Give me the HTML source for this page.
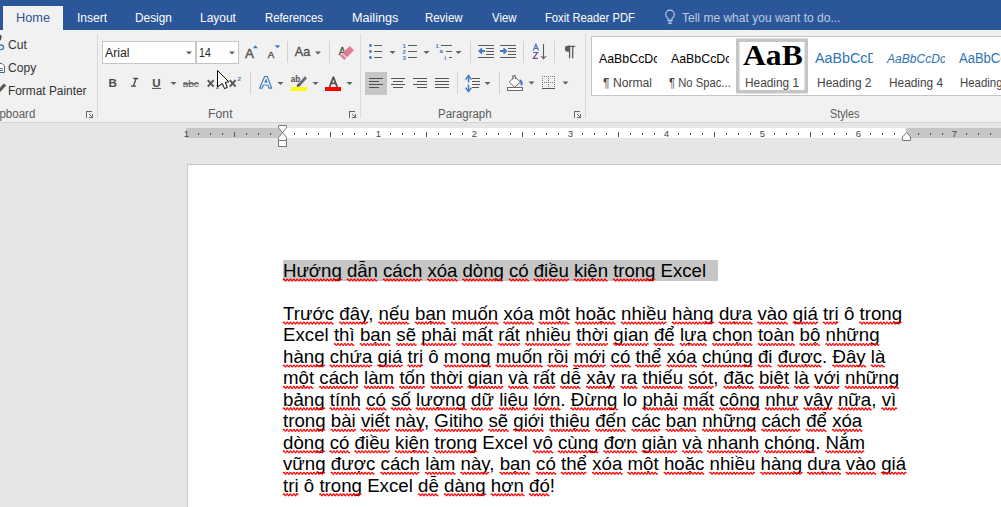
<!DOCTYPE html>
<html><head><meta charset="utf-8">
<style>
html,body{margin:0;padding:0;}
body{width:1001px;height:507px;overflow:hidden;position:relative;background:#e6e6e6;font-family:"Liberation Sans",sans-serif;}
.abs{position:absolute;}
.tx{position:absolute;white-space:pre;line-height:0;transform-origin:0 0;}
#titlebar{position:absolute;left:0;top:0;width:1001px;height:30px;background:#2b579a;}
#hometab{position:absolute;left:3px;top:6px;width:60px;height:25px;background:#f1f1f1;}
#ribbon{position:absolute;left:0;top:30px;width:1001px;height:92px;background:#f1f1f1;border-bottom:1px solid #d4d4d4;}
#page{position:absolute;left:187px;top:164px;width:900px;height:400px;background:#fff;border:1px solid #c8c8c8;}
.doc{position:absolute;left:0;white-space:pre;font-family:"Liberation Sans",sans-serif;font-size:18.67px;line-height:0;color:#000;letter-spacing:0.05px;}
</style></head><body>
<div id="titlebar"></div>
<div id="hometab"></div>
<div id="ribbon"></div>

<!-- ribbon shapes and icons -->
<svg class="abs" style="left:0;top:0" width="1001" height="123" viewBox="0 0 1001 123">
  <!-- group separators -->
  <g fill="#d9d9d9">
    <rect x="97" y="34" width="1" height="84"/>
    <rect x="360" y="34" width="1" height="84"/>
    <rect x="585" y="34" width="1" height="84"/>
  </g>
  <g fill="#d2d2d2">
    <rect x="287" y="41" width="1" height="22"/>
    <rect x="329" y="41" width="1" height="22"/>
    <rect x="250" y="72" width="1" height="22"/>
    <rect x="470" y="41" width="1" height="22"/>
    <rect x="523" y="41" width="1" height="22"/>
    <rect x="554" y="41" width="1" height="22"/>
    <rect x="457" y="72" width="1" height="22"/>
    <rect x="499" y="72" width="1" height="22"/>
  </g>
  <!-- clipboard icons (clipped at left edge) -->
  <path d="M-1 35 H1.2 L1.6 37.5 L0.8 40.3 H-1 Z" fill="#4a4a4a"/>
  <ellipse cx="1" cy="47.3" rx="2.6" ry="2.3" stroke="#3e7bc1" stroke-width="1.3" fill="none"/>
  <path d="M-3 63.5 H2 L4.5 66 V72.5 H-3" stroke="#606060" stroke-width="1" fill="#fff"/>
  <path d="M-2 68.5 H3 M-2 70.5 H3" stroke="#3e7bc1" stroke-width="1"/>
  <path d="M-1 91 L5 84.5" stroke="#555" stroke-width="3.2" fill="none"/>
  <!-- launchers -->
  <g fill="#6a6a6a">
    <path d="M86 111h6v1h-5v6h-1z M89 114h1v1h1v1h1v-2h1v4h-4v-1h2v-1h-1v-1h-1z"/>
    <path d="M349 111h6v1h-5v6h-1z M352 114h1v1h1v1h1v-2h1v4h-4v-1h2v-1h-1v-1h-1z"/>
    <path d="M574 111h6v1h-5v6h-1z M577 114h1v1h1v1h1v-2h1v4h-4v-1h2v-1h-1v-1h-1z"/>
  </g>
  <!-- font boxes -->
  <rect x="102.5" y="41.5" width="93" height="22" fill="#fff" stroke="#c6c6c6"/>
  <rect x="196.5" y="41.5" width="42" height="22" fill="#fff" stroke="#c6c6c6"/>
  <g fill="#606060">
    <path d="M186 51.5 h6 l-3 3z"/>
    <path d="M229 51.5 h6 l-3 3z"/>
    <path d="M315 51.5 h6 l-3 3z"/>
    <path d="M170.5 82 h6 l-3 3z"/>
    <path d="M277.5 82 h6 l-3 3z"/>
    <path d="M312.5 82 h6 l-3 3z"/>
    <path d="M346.5 82 h6 l-3 3z"/>
    <path d="M389.5 51 h6 l-3 3z"/>
    <path d="M423.5 51 h6 l-3 3z"/>
    <path d="M455.5 51 h6 l-3 3z"/>
    <path d="M484.5 82 h6 l-3 3z"/>
    <path d="M528.5 81.5 h6 l-3 3z"/>
    <path d="M562.5 81.5 h6 l-3 3z"/>
  </g>
  <!-- grow / shrink font -->
  <g fill="#505050" stroke="#505050" stroke-width="0.35" font-family="Liberation Sans">
    <text x="244.9" y="57.7" font-size="13.4">A</text>
    <text x="267.8" y="57.7" font-size="9.8">A</text>
    <text x="294.8" y="56.2" font-size="12.6" textLength="15.4" lengthAdjust="spacingAndGlyphs">Aa</text>
  </g>
  <path d="M252.8 48.2 l2.6 -3 l2.6 3z" fill="#3e7bc1"/>
  <path d="M274.8 45.2 h5.4 l-2.7 3z" fill="#3e7bc1"/>
  <!-- clear formatting -->
  <text x="338.8" y="55" font-size="10.5" fill="#505050" stroke="#505050" stroke-width="0.3" font-family="Liberation Sans">A</text>
  <g transform="translate(347 53) rotate(-45)">
    <rect x="-6.8" y="-3" width="13.6" height="6" fill="#e07b90"/>
    <rect x="-4.2" y="-3.2" width="0.9" height="6.4" fill="#f1f1f1"/>
  </g>
  <!-- B I U -->
  <text x="108.4" y="86.7" font-size="11.6" font-weight="bold" fill="#4a4a4a" font-family="Liberation Sans">B</text>
  <path d="M133.2 78.5 h5 M131 86.2 h5 M136.2 78.6 L133.3 86.2" stroke="#4a4a4a" stroke-width="1.3" fill="none"/>
  <text x="152.2" y="86.7" font-size="11.6" font-weight="bold" fill="#4a4a4a" font-family="Liberation Sans">U</text>
  <rect x="152" y="87.9" width="9" height="1" fill="#4a4a4a"/>
  <!-- abc strike, sub, sup -->
  <text x="182.8" y="86.8" font-size="9.6" fill="#555" font-family="Liberation Sans" textLength="16" lengthAdjust="spacingAndGlyphs">abc</text>
  <rect x="183" y="83.2" width="16" height="1" fill="#555"/>
  <path d="M207.8 80.2 L213.6 86.6 M213.6 80.2 L207.8 86.6" stroke="#555" stroke-width="1.9"/>
  <path d="M229.8 80.2 L235.6 86.6 M235.6 80.2 L229.8 86.6" stroke="#555" stroke-width="1.9"/>
  <text x="215.8" y="89" font-size="6.2" fill="#3e7bc1" font-family="Liberation Sans" font-weight="bold">2</text>
  <text x="237.6" y="81" font-size="6.2" fill="#3e7bc1" font-family="Liberation Sans" font-weight="bold">2</text>
  <!-- text effects -->
  <path d="M264.6 76.6 h2.8 l4.2 11.6 h-2.6 l-1.1 -3.2 h-4.6 l-1.1 3.2 h-2.6 z" fill="#fdfdfd" stroke="#3f7cc0" stroke-width="1.2" stroke-linejoin="round"/>
  <path d="M264.2 82.8 h3.6 l-1.8 -4.6z" fill="#3f7cc0"/>
  <!-- highlighter -->
  <text x="290.8" y="81.8" font-size="9.2" fill="#4f4f4f" font-family="Liberation Sans" font-weight="bold" textLength="9.6" lengthAdjust="spacingAndGlyphs">ab</text>
  <path d="M298.5 85.5 L306 77.2" stroke="#6a6a6a" stroke-width="2.8"/>
  <path d="M297.2 86.5 L299 84.6" stroke="#444" stroke-width="2"/>
  <rect x="291" y="87" width="16" height="4" fill="#ffff00"/>
  <!-- font color -->
  <path d="M329.6 86.8 L333.4 77.2 L337.2 86.8 M331 83.4 h4.8" stroke="#555" stroke-width="1.8" fill="none" stroke-linejoin="round"/>
  <rect x="325" y="87" width="16" height="4" fill="#ff0000"/>
  <!-- bullets -->
  <g fill="#3e7bc1">
    <circle cx="370.5" cy="45.5" r="1.4"/><circle cx="370.5" cy="51.5" r="1.4"/><circle cx="370.5" cy="57.5" r="1.4"/>
  </g>
  <g stroke="#5a5a5a" stroke-width="1.1">
    <path d="M374 45.5 h8 M374 51.5 h8 M374 57.5 h8"/>
    <path d="M408 45.5 h9 M408 51.5 h9 M408 57.5 h9"/>
    <path d="M441 45.5 h11 M446 51.5 h6 M449 57.5 h3"/>
  </g>
  <g fill="#3e7bc1" font-family="Liberation Sans" font-weight="bold" font-size="6">
    <text x="402.6" y="48">1</text><text x="402.6" y="54">2</text><text x="402.6" y="60">3</text>
    <text x="435.6" y="48">1</text><text x="439.6" y="53">a</text><text x="444.6" y="60">i</text>
  </g>
  <!-- indent -->
  <g stroke="#5a5a5a" stroke-width="1.1">
    <path d="M478 45.5 h16 M486 48.5 h8 M486 51.5 h8 M486 54.5 h8 M478 57.5 h16"/>
    <path d="M500 45.5 h16 M508 48.5 h8 M508 51.5 h8 M508 54.5 h8 M500 57.5 h16"/>
  </g>
  <path d="M479 51 h6 M482 48.3 l-2.7 2.7 l2.7 2.7" stroke="#3e7bc1" stroke-width="1.8" fill="none"/>
  <path d="M500 51 h6 M503.5 48.3 l2.7 2.7 l-2.7 2.7" stroke="#3e7bc1" stroke-width="1.8" fill="none"/>
  <!-- sort -->
  <path d="M533.3 50.6 L535.9 44.2 L538.6 50.6 M534.3 48.4 h3.2" stroke="#3e7bc1" stroke-width="1.2" fill="none"/>
  <path d="M533.2 52.5 h4.3 l-4.2 5.9 h4.5" stroke="#7a45a8" stroke-width="1.2" fill="none"/>
  <path d="M543.5 44 V58.5 M541 56 l2.5 2.7 l2.5 -2.7" stroke="#5a5a5a" stroke-width="1.1" fill="none"/>
  <!-- pilcrow -->
  <path d="M568 46.3 H575.2 M569.6 46 V58.2 M572.7 46 V58.2" stroke="#5a5a5a" stroke-width="1.3" fill="none"/>
  <path d="M570 45.7 H567.6 a2.7 3.05 0 0 0 0 6.1 H570z" fill="#5a5a5a"/>
  <!-- align buttons -->
  <rect x="365" y="72" width="22" height="23" fill="#c6c6c6"/>
  <g stroke="#555" stroke-width="1.1">
    <path d="M369 78.5 h14 M369 81.5 h10 M369 84.5 h14 M369 87.5 h10"/>
    <path d="M391 78.5 h14 M393 81.5 h10 M391 84.5 h14 M393 87.5 h10"/>
    <path d="M413 78.5 h14 M417 81.5 h10 M413 84.5 h14 M417 87.5 h10"/>
    <path d="M435 78.5 h14 M435 81.5 h14 M435 84.5 h14 M435 87.5 h14"/>
    <path d="M472 78.5 h8 M472 81.5 h8 M472 84.5 h8 M472 87.5 h7"/>
  </g>
  <path d="M468.5 77 V82.6 M468.5 84.6 V90" stroke="#3e7bc1" stroke-width="1.4" fill="none"/><path d="M465.6 79.6 L468.5 75.4 L471.4 79.6 M465.6 87.6 L468.5 91.6 L471.4 87.6" stroke="#3e7bc1" stroke-width="1.5" fill="none" stroke-linejoin="round"/>
  <!-- shading -->
  <rect x="507.5" y="87.5" width="15" height="3" fill="#fff" stroke="#6a6a6a"/>
  <path d="M509.2 82 L514.6 76.8 L520.4 82 L514.6 87.2 z" fill="#fff" stroke="#6a6a6a"/>
  <path d="M512.8 79.5 V75.7 h2.6 v3.5" stroke="#6a6a6a" fill="none"/>
  <path d="M519.6 79 q3.6 1.6 3 5.2 l-1.6 2z" fill="#3e7bc1"/>
  <!-- borders -->
  <g fill="#777">
    <rect x="542" y="76" width="1" height="1"/><rect x="544" y="76" width="1" height="1"/><rect x="546" y="76" width="1" height="1"/><rect x="548" y="76" width="1" height="1"/><rect x="550" y="76" width="1" height="1"/><rect x="552" y="76" width="1" height="1"/><rect x="554" y="76" width="1" height="1"/>
    <rect x="542" y="82" width="1" height="1"/><rect x="544" y="82" width="1" height="1"/><rect x="546" y="82" width="1" height="1"/><rect x="548" y="82" width="1" height="1"/><rect x="550" y="82" width="1" height="1"/><rect x="552" y="82" width="1" height="1"/><rect x="554" y="82" width="1" height="1"/>
    <rect x="542" y="78" width="1" height="1"/><rect x="542" y="80" width="1" height="1"/><rect x="542" y="84" width="1" height="1"/><rect x="542" y="86" width="1" height="1"/>
    <rect x="548" y="78" width="1" height="1"/><rect x="548" y="80" width="1" height="1"/><rect x="548" y="84" width="1" height="1"/><rect x="548" y="86" width="1" height="1"/>
    <rect x="554" y="78" width="1" height="1"/><rect x="554" y="80" width="1" height="1"/><rect x="554" y="84" width="1" height="1"/><rect x="554" y="86" width="1" height="1"/>
  </g>
  <rect x="542" y="88" width="13" height="1" fill="#555"/>
  <!-- styles gallery -->
  <rect x="591.5" y="36.5" width="420" height="59" fill="#fff" stroke="#c6c6c6"/>
  <rect x="737.75" y="40.25" width="68.5" height="51.5" fill="none" stroke="#c6c6c6" stroke-width="3.5"/>
  <!-- lightbulb -->
  <path d="M667.9 22 h4.2 M668.4 23.6 h3.2" stroke="#bccbe2" stroke-width="1"/>
  <path d="M668 20.4 v-2 c-1.4 -1 -2.3 -2.4 -2.3 -4 a4.3 4.3 0 0 1 8.6 0 c0 1.6 -0.9 3 -2.3 4 v2 z" fill="none" stroke="#bccbe2" stroke-width="1.1"/>
</svg>

<div class='tx' style='left:15.68px;top:18.00px;font-family:"Liberation Sans";font-size:12.5px;font-weight:normal;font-style:normal;color:#2b579a;transform:scaleX(1.0187)'>Home</div>
<div class='tx' style='left:77.03px;top:18.00px;font-family:"Liberation Sans";font-size:12.5px;font-weight:normal;font-style:normal;color:#ffffff;transform:scaleX(0.9667)'>Insert</div>
<div class='tx' style='left:135.45px;top:18.00px;font-family:"Liberation Sans";font-size:12.5px;font-weight:normal;font-style:normal;color:#ffffff;transform:scaleX(0.9486)'>Design</div>
<div class='tx' style='left:200.44px;top:18.00px;font-family:"Liberation Sans";font-size:12.5px;font-weight:normal;font-style:normal;color:#ffffff;transform:scaleX(0.9568)'>Layout</div>
<div class='tx' style='left:265.10px;top:18.00px;font-family:"Liberation Sans";font-size:12.5px;font-weight:normal;font-style:normal;color:#ffffff;transform:scaleX(0.9048)'>References</div>
<div class='tx' style='left:351.59px;top:18.00px;font-family:"Liberation Sans";font-size:12.5px;font-weight:normal;font-style:normal;color:#ffffff;transform:scaleX(1.0091)'>Mailings</div>
<div class='tx' style='left:425.38px;top:18.00px;font-family:"Liberation Sans";font-size:12.5px;font-weight:normal;font-style:normal;color:#ffffff;transform:scaleX(0.9150)'>Review</div>
<div class='tx' style='left:492.20px;top:18.00px;font-family:"Liberation Sans";font-size:12.5px;font-weight:normal;font-style:normal;color:#ffffff;transform:scaleX(0.9111)'>View</div>
<div class='tx' style='left:545.30px;top:18.00px;font-family:"Liberation Sans";font-size:12.5px;font-weight:normal;font-style:normal;color:#ffffff;transform:scaleX(0.8990)'>Foxit Reader PDF</div>
<div class='tx' style='left:682.00px;top:18.00px;font-family:"Liberation Sans";font-size:12.5px;font-weight:normal;font-style:normal;color:#bccbe2;transform:scaleX(0.9622)'>Tell me what you want to do...</div>
<div class='tx' style='left:7.79px;top:45.00px;font-family:"Liberation Sans";font-size:12px;font-weight:normal;font-style:normal;color:#333333;transform:scaleX(1.0111)'>Cut</div>
<div class='tx' style='left:7.79px;top:68.00px;font-family:"Liberation Sans";font-size:12px;font-weight:normal;font-style:normal;color:#333333;transform:scaleX(1.0074)'>Copy</div>
<div class='tx' style='left:7.81px;top:91.00px;font-family:"Liberation Sans";font-size:12px;font-weight:normal;font-style:normal;color:#333333;transform:scaleX(0.9897)'>Format Painter</div>
<div class='tx' style='left:-13.96px;top:114.00px;font-family:"Liberation Sans";font-size:12px;font-weight:normal;font-style:normal;color:#5c5c5c;transform:scaleX(0.9600)'>Clipboard</div>
<div class='tx' style='left:208.48px;top:114.00px;font-family:"Liberation Sans";font-size:12px;font-weight:normal;font-style:normal;color:#5c5c5c;transform:scaleX(1.0217)'>Font</div>
<div class='tx' style='left:437.84px;top:114.00px;font-family:"Liberation Sans";font-size:12px;font-weight:normal;font-style:normal;color:#5c5c5c;transform:scaleX(0.9574)'>Paragraph</div>
<div class='tx' style='left:829.70px;top:114.00px;font-family:"Liberation Sans";font-size:12px;font-weight:normal;font-style:normal;color:#5c5c5c;transform:scaleX(0.8968)'>Styles</div>
<div class='tx' style='left:105.20px;top:53.20px;font-family:"Liberation Sans";font-size:12.5px;font-weight:normal;font-style:normal;color:#262626;transform:scaleX(0.9792)'>Arial</div>
<div class='tx' style='left:199.15px;top:53.20px;font-family:"Liberation Sans";font-size:12.5px;font-weight:normal;font-style:normal;color:#262626;transform:scaleX(0.8462)'>14</div>
<div class='tx' style='left:603.00px;top:83.00px;font-family:"Liberation Sans";font-size:12px;font-weight:normal;font-style:normal;color:#444444;transform:scaleX(1.0104)'>¶ Normal</div>
<div class='tx' style='left:669.00px;top:83.00px;font-family:"Liberation Sans";font-size:12px;font-weight:normal;font-style:normal;color:#444444;transform:scaleX(0.9385)'>¶ No Spac...</div>
<div class='tx' style='left:745.01px;top:83.00px;font-family:"Liberation Sans";font-size:12px;font-weight:normal;font-style:normal;color:#444444;transform:scaleX(0.9887)'>Heading 1</div>
<div class='tx' style='left:816.70px;top:83.00px;font-family:"Liberation Sans";font-size:12px;font-weight:normal;font-style:normal;color:#444444;transform:scaleX(0.9962)'>Heading 2</div>
<div class='tx' style='left:888.71px;top:83.00px;font-family:"Liberation Sans";font-size:12px;font-weight:normal;font-style:normal;color:#444444;transform:scaleX(0.9870)'>Heading 4</div>
<div class='tx' style='left:960.45px;top:83.00px;font-family:"Liberation Sans";font-size:12px;font-weight:normal;font-style:normal;color:#444444;transform:scaleX(0.9500)'>Heading</div>
<div style='position:absolute;left:591px;top:0;width:66px;height:123px;overflow:hidden'><div style='position:absolute;left:-591px;top:0'><div class='tx' style='left:598.50px;top:59.20px;font-family:"Liberation Sans";font-size:13px;font-weight:normal;font-style:normal;color:#000000;transform:scaleX(0.9500)'>AaBbCcDc</div></div></div>
<div style='position:absolute;left:665px;top:0;width:64px;height:123px;overflow:hidden'><div style='position:absolute;left:-665px;top:0'><div class='tx' style='left:670.80px;top:59.20px;font-family:"Liberation Sans";font-size:13px;font-weight:normal;font-style:normal;color:#000000;transform:scaleX(0.9500)'>AaBbCcDc</div></div></div>
<div class='tx' style='left:743.00px;top:54.70px;font-family:"Liberation Serif";font-size:30px;font-weight:bold;font-style:normal;color:#000000;transform:scaleX(1.0536)'>AaB</div>
<div style='position:absolute;left:810px;top:0;width:63px;height:123px;overflow:hidden'><div style='position:absolute;left:-810px;top:0'><div class='tx' style='left:815.00px;top:57.80px;font-family:"Liberation Sans";font-size:15.5px;font-weight:normal;font-style:normal;color:#2e74b5;transform:scaleX(0.9200)'>AaBbCcDd</div></div></div>
<div style='position:absolute;left:880px;top:0;width:65px;height:123px;overflow:hidden'><div style='position:absolute;left:-880px;top:0'><div class='tx' style='left:887.00px;top:59.00px;font-family:"Liberation Sans";font-size:13px;font-weight:normal;font-style:italic;color:#2e74b5;transform:scaleX(0.9300)'>AaBbCcDc</div></div></div>
<div class='tx' style='left:959.00px;top:58.00px;font-family:"Liberation Sans";font-size:14px;font-weight:normal;font-style:normal;color:#2e74b5;transform:scaleX(0.9300)'>AaBbCc</div>

<!-- ruler -->
<svg class="abs" style="left:0;top:123px" width="1001" height="30" viewBox="0 123 1001 30">
  <rect x="186" y="128" width="97" height="10" fill="#c6c6c6"/>
  <rect x="283" y="128" width="623" height="10" fill="#ffffff"/>
  <rect x="906" y="128" width="95" height="10" fill="#c6c6c6"/>
  <text x='186.5' y='137' font-size='9.5' text-anchor='middle' fill='#444' font-family='Liberation Sans'>1</text>
<rect x='198' y='133' width='1' height='2' fill='#555'/>
<rect x='210' y='133' width='1' height='2' fill='#555'/>
<rect x='222' y='133' width='1' height='2' fill='#555'/>
<rect x='234' y='132' width='1' height='5' fill='#555'/>
<rect x='246' y='133' width='1' height='2' fill='#555'/>
<rect x='258' y='133' width='1' height='2' fill='#555'/>
<rect x='270' y='133' width='1' height='2' fill='#555'/>
<rect x='294' y='133' width='1' height='2' fill='#555'/>
<rect x='306' y='133' width='1' height='2' fill='#555'/>
<rect x='318' y='133' width='1' height='2' fill='#555'/>
<rect x='330' y='132' width='1' height='5' fill='#555'/>
<rect x='342' y='133' width='1' height='2' fill='#555'/>
<rect x='354' y='133' width='1' height='2' fill='#555'/>
<rect x='366' y='133' width='1' height='2' fill='#555'/>
<text x='378.5' y='137' font-size='9.5' text-anchor='middle' fill='#444' font-family='Liberation Sans'>1</text>
<rect x='390' y='133' width='1' height='2' fill='#555'/>
<rect x='402' y='133' width='1' height='2' fill='#555'/>
<rect x='414' y='133' width='1' height='2' fill='#555'/>
<rect x='426' y='132' width='1' height='5' fill='#555'/>
<rect x='438' y='133' width='1' height='2' fill='#555'/>
<rect x='450' y='133' width='1' height='2' fill='#555'/>
<rect x='462' y='133' width='1' height='2' fill='#555'/>
<text x='474.5' y='137' font-size='9.5' text-anchor='middle' fill='#444' font-family='Liberation Sans'>2</text>
<rect x='486' y='133' width='1' height='2' fill='#555'/>
<rect x='498' y='133' width='1' height='2' fill='#555'/>
<rect x='510' y='133' width='1' height='2' fill='#555'/>
<rect x='522' y='132' width='1' height='5' fill='#555'/>
<rect x='534' y='133' width='1' height='2' fill='#555'/>
<rect x='546' y='133' width='1' height='2' fill='#555'/>
<rect x='558' y='133' width='1' height='2' fill='#555'/>
<text x='570.5' y='137' font-size='9.5' text-anchor='middle' fill='#444' font-family='Liberation Sans'>3</text>
<rect x='582' y='133' width='1' height='2' fill='#555'/>
<rect x='594' y='133' width='1' height='2' fill='#555'/>
<rect x='606' y='133' width='1' height='2' fill='#555'/>
<rect x='618' y='132' width='1' height='5' fill='#555'/>
<rect x='630' y='133' width='1' height='2' fill='#555'/>
<rect x='642' y='133' width='1' height='2' fill='#555'/>
<rect x='654' y='133' width='1' height='2' fill='#555'/>
<text x='666.5' y='137' font-size='9.5' text-anchor='middle' fill='#444' font-family='Liberation Sans'>4</text>
<rect x='678' y='133' width='1' height='2' fill='#555'/>
<rect x='690' y='133' width='1' height='2' fill='#555'/>
<rect x='702' y='133' width='1' height='2' fill='#555'/>
<rect x='714' y='132' width='1' height='5' fill='#555'/>
<rect x='726' y='133' width='1' height='2' fill='#555'/>
<rect x='738' y='133' width='1' height='2' fill='#555'/>
<rect x='750' y='133' width='1' height='2' fill='#555'/>
<text x='762.5' y='137' font-size='9.5' text-anchor='middle' fill='#444' font-family='Liberation Sans'>5</text>
<rect x='774' y='133' width='1' height='2' fill='#555'/>
<rect x='786' y='133' width='1' height='2' fill='#555'/>
<rect x='798' y='133' width='1' height='2' fill='#555'/>
<rect x='810' y='132' width='1' height='5' fill='#555'/>
<rect x='822' y='133' width='1' height='2' fill='#555'/>
<rect x='834' y='133' width='1' height='2' fill='#555'/>
<rect x='846' y='133' width='1' height='2' fill='#555'/>
<text x='858.5' y='137' font-size='9.5' text-anchor='middle' fill='#444' font-family='Liberation Sans'>6</text>
<rect x='870' y='133' width='1' height='2' fill='#555'/>
<rect x='882' y='133' width='1' height='2' fill='#555'/>
<rect x='894' y='133' width='1' height='2' fill='#555'/>
<rect x='918' y='133' width='1' height='2' fill='#555'/>
<rect x='930' y='133' width='1' height='2' fill='#555'/>
<rect x='942' y='133' width='1' height='2' fill='#555'/>
<text x='954.5' y='137' font-size='9.5' text-anchor='middle' fill='#444' font-family='Liberation Sans'>7</text>
<rect x='966' y='133' width='1' height='2' fill='#555'/>
<rect x='978' y='133' width='1' height='2' fill='#555'/>
<rect x='990' y='133' width='1' height='2' fill='#555'/>
  <path d="M278.5 125.5 H286.5 V127.8 L282.5 132.6 L278.5 127.8 Z" fill="#fff" stroke="#7a7a7a"/>
  <path d="M282.5 132.6 L286.5 137.4 V140.5 H278.5 V137.4 Z" fill="#fff" stroke="#7a7a7a"/>
  <rect x="278.5" y="140.5" width="8" height="6" fill="#fff" stroke="#7a7a7a"/>
  <path d="M902.5 140.5 V137 L906.5 132.5 L910.5 137 V140.5 Z" fill="#fff" stroke="#7a7a7a"/>
</svg>

<div id="page"></div>
<div class='abs' style='left:283px;top:260px;width:435px;height:21px;background:#c6c6c6'></div>
<div class='doc' style='left:283px;top:271.03px;letter-spacing:-0.045px'><span class='sq'>Hướng</span> <span class='sq'>dẫn</span> <span class='sq'>cách</span> <span class='sq'>xóa</span> <span class='sq'>dòng</span> <span class='sq'>có</span> <span class='sq'>điều</span> <span class='sq'>kiện</span> <span class='sq'>trong</span> Excel</div>
<div class='doc' style='left:283px;top:313.97px;letter-spacing:0.0286px'><span class='sq'>Trước</span> <span class='sq'>đây</span>, <span class='sq'>nếu</span> <span class='sq'>bạn</span> <span class='sq'>muốn</span> <span class='sq'>xóa</span> <span class='sq'>một</span> <span class='sq'>hoặc</span> <span class='sq'>nhiều</span> <span class='sq'>hàng</span> <span class='sq'>dựa</span> <span class='sq'>vào</span> <span class='sq'>giá</span> <span class='sq'>trị</span> ô <span class='sq'>trong</span></div>
<div class='doc' style='left:283px;top:335.44px;letter-spacing:0.0171px'>Excel <span class='sq'>thì</span> <span class='sq'>bạn</span> <span class='sq'>sẽ</span> <span class='sq'>phải</span> <span class='sq'>mất</span> <span class='sq'>rất</span> <span class='sq'>nhiều</span> <span class='sq'>thời</span> <span class='sq'>gian</span> <span class='sq'>để</span> <span class='sq'>lựa</span> <span class='sq'>chọn</span> <span class='sq'>toàn</span> <span class='sq'>bộ</span> <span class='sq'>những</span></div>
<div class='doc' style='left:283px;top:356.91px;letter-spacing:0.0000px'><span class='sq'>hàng</span> <span class='sq'>chứa</span> <span class='sq'>giá</span> <span class='sq'>trị</span> ô <span class='sq'>mong</span> <span class='sq'>muốn</span> <span class='sq'>rồi</span> <span class='sq'>mới</span> <span class='sq'>có</span> <span class='sq'>thể</span> <span class='sq'>xóa</span> <span class='sq'>chúng</span> <span class='sq'>đi</span> <span class='sq'>được</span>. <span class='sq'>Đây</span> <span class='sq'>là</span></div>
<div class='doc' style='left:283px;top:378.38px;letter-spacing:0.0187px'><span class='sq'>một</span> <span class='sq'>cách</span> <span class='sq'>làm</span> <span class='sq'>tốn</span> <span class='sq'>thời</span> <span class='sq'>gian</span> <span class='sq'>và</span> <span class='sq'>rất</span> <span class='sq'>dễ</span> <span class='sq'>xảy</span> <span class='sq'>ra</span> <span class='sq'>thiếu</span> <span class='sq'>sót</span>, <span class='sq'>đặc</span> <span class='sq'>biệt</span> <span class='sq'>là</span> <span class='sq'>với</span> <span class='sq'>những</span></div>
<div class='doc' style='left:283px;top:399.85px;letter-spacing:0.0197px'><span class='sq'>bảng</span> <span class='sq'>tính</span> <span class='sq'>có</span> <span class='sq'>số</span> <span class='sq'>lượng</span> <span class='sq'>dữ</span> <span class='sq'>liệu</span> <span class='sq'>lớn</span>. <span class='sq'>Đừng</span> lo <span class='sq'>phải</span> <span class='sq'>mất</span> <span class='sq'>công</span> <span class='sq'>như</span> <span class='sq'>vậy</span> <span class='sq'>nữa</span>, <span class='sq'>vì</span></div>
<div class='doc' style='left:283px;top:421.32px;letter-spacing:0.0116px'><span class='sq'>trong</span> <span class='sq'>bài</span> <span class='sq'>viết</span> <span class='sq'>này</span>, <span class='sq'>Gitiho</span> <span class='sq'>sẽ</span> <span class='sq'>giới</span> <span class='sq'>thiệu</span> <span class='sq'>đến</span> <span class='sq'>các</span> <span class='sq'>bạn</span> <span class='sq'>những</span> <span class='sq'>cách</span> <span class='sq'>để</span> <span class='sq'>xóa</span></div>
<div class='doc' style='left:283px;top:442.79px;letter-spacing:0.0031px'><span class='sq'>dòng</span> <span class='sq'>có</span> <span class='sq'>điều</span> <span class='sq'>kiện</span> <span class='sq'>trong</span> Excel <span class='sq'>vô</span> <span class='sq'>cùng</span> <span class='sq'>đơn</span> <span class='sq'>giản</span> <span class='sq'>và</span> <span class='sq'>nhanh</span> <span class='sq'>chóng</span>. <span class='sq'>Nắm</span></div>
<div class='doc' style='left:283px;top:464.26px;letter-spacing:0.0145px'><span class='sq'>vững</span> <span class='sq'>được</span> <span class='sq'>cách</span> <span class='sq'>làm</span> <span class='sq'>này</span>, <span class='sq'>bạn</span> <span class='sq'>có</span> <span class='sq'>thể</span> <span class='sq'>xóa</span> <span class='sq'>một</span> <span class='sq'>hoặc</span> <span class='sq'>nhiều</span> <span class='sq'>hàng</span> <span class='sq'>dựa</span> <span class='sq'>vào</span> <span class='sq'>giá</span></div>
<div class='doc' style='left:283px;top:485.73px;letter-spacing:0.0125px'><span class='sq'>trị</span> ô <span class='sq'>trong</span> Excel <span class='sq'>dễ</span> <span class='sq'>dàng</span> <span class='sq'>hơn</span> <span class='sq'>đó</span>!</div>
<svg class="abs" style="left:0;top:0" width="1001" height="123">
<path d="M217.5 70.5 L228.8 81.8 L225.2 82.4 L227.3 87.4 L224.6 88.6 L222.3 83.6 L217.5 86.8 Z" fill="#fff" stroke="#000" stroke-width="1" stroke-linejoin="miter"/>
</svg>
<svg class='abs' style='left:0;top:0' width='1001' height='507'><path d='M283.00 280.10 Q283.84 278.10 284.68 280.10 T286.35 280.10 T288.03 280.10 T289.70 280.10 T291.38 280.10 T293.05 280.10 T294.73 280.10 T296.40 280.10 T298.08 280.10 T299.75 280.10 T301.43 280.10 T303.10 280.10 T304.78 280.10 T306.45 280.10 T308.13 280.10 T309.80 280.10 T311.48 280.10 T313.15 280.10 T314.83 280.10 T316.50 280.10 T318.18 280.10 T319.85 280.10 T321.53 280.10 T323.20 280.10 T324.88 280.10 T326.55 280.10 T328.23 280.10 T329.90 280.10 T331.58 280.10 T333.25 280.10 T334.93 280.10 T336.60 280.10 T338.28 280.10 T339.95 280.10 T341.63 280.10 M346.88 280.10 Q347.71 278.10 348.55 280.10 T350.23 280.10 T351.90 280.10 T353.58 280.10 T355.25 280.10 T356.93 280.10 T358.60 280.10 T360.28 280.10 T361.95 280.10 T363.63 280.10 T365.30 280.10 T366.98 280.10 T368.65 280.10 T370.33 280.10 T372.00 280.10 T373.68 280.10 T375.35 280.10 T377.03 280.10 M383.02 280.10 Q383.85 278.10 384.69 280.10 T386.37 280.10 T388.04 280.10 T389.72 280.10 T391.39 280.10 T393.07 280.10 T394.74 280.10 T396.42 280.10 T398.09 280.10 T399.77 280.10 T401.44 280.10 T403.12 280.10 T404.79 280.10 T406.47 280.10 T408.14 280.10 T409.82 280.10 T411.49 280.10 T413.17 280.10 T414.84 280.10 T416.52 280.10 T418.19 280.10 T419.87 280.10 T421.54 280.10 M427.39 280.10 Q428.23 278.10 429.07 280.10 T430.74 280.10 T432.42 280.10 T434.09 280.10 T435.77 280.10 T437.44 280.10 T439.12 280.10 T440.79 280.10 T442.47 280.10 T444.14 280.10 T445.82 280.10 T447.49 280.10 T449.17 280.10 T450.84 280.10 T452.52 280.10 T454.19 280.10 T455.87 280.10 T457.54 280.10 M462.48 280.10 Q463.32 278.10 464.16 280.10 T465.83 280.10 T467.51 280.10 T469.18 280.10 T470.86 280.10 T472.53 280.10 T474.21 280.10 T475.88 280.10 T477.56 280.10 T479.23 280.10 T480.91 280.10 T482.58 280.10 T484.26 280.10 T485.93 280.10 T487.61 280.10 T489.28 280.10 T490.96 280.10 T492.63 280.10 T494.31 280.10 T495.98 280.10 T497.66 280.10 T499.33 280.10 T501.01 280.10 T502.68 280.10 M508.95 280.10 Q509.79 278.10 510.63 280.10 T512.30 280.10 T513.98 280.10 T515.65 280.10 T517.33 280.10 T519.00 280.10 T520.68 280.10 T522.35 280.10 T524.03 280.10 T525.70 280.10 T527.38 280.10 T529.05 280.10 M533.72 280.10 Q534.56 278.10 535.39 280.10 T537.07 280.10 T538.74 280.10 T540.42 280.10 T542.09 280.10 T543.77 280.10 T545.44 280.10 T547.12 280.10 T548.79 280.10 T550.47 280.10 T552.14 280.10 T553.82 280.10 T555.49 280.10 T557.17 280.10 T558.84 280.10 T560.52 280.10 T562.19 280.10 T563.87 280.10 T565.54 280.10 T567.22 280.10 T568.89 280.10 M573.95 280.10 Q574.79 278.10 575.63 280.10 T577.30 280.10 T578.98 280.10 T580.65 280.10 T582.33 280.10 T584.00 280.10 T585.68 280.10 T587.35 280.10 T589.03 280.10 T590.70 280.10 T592.38 280.10 T594.05 280.10 T595.73 280.10 T597.40 280.10 T599.08 280.10 T600.75 280.10 T602.43 280.10 T604.10 280.10 T605.78 280.10 T607.45 280.10 M613.14 280.10 Q613.98 278.10 614.82 280.10 T616.49 280.10 T618.17 280.10 T619.84 280.10 T621.52 280.10 T623.19 280.10 T624.87 280.10 T626.54 280.10 T628.22 280.10 T629.89 280.10 T631.57 280.10 T633.24 280.10 T634.92 280.10 T636.59 280.10 T638.27 280.10 T639.94 280.10 T641.62 280.10 T643.29 280.10 T644.97 280.10 T646.64 280.10 T648.32 280.10 T649.99 280.10 T651.67 280.10 T653.34 280.10 T655.02 280.10 M283.00 323.05 Q283.84 321.05 284.68 323.05 T286.35 323.05 T288.03 323.05 T289.70 323.05 T291.38 323.05 T293.05 323.05 T294.73 323.05 T296.40 323.05 T298.08 323.05 T299.75 323.05 T301.43 323.05 T303.10 323.05 T304.78 323.05 T306.45 323.05 T308.13 323.05 T309.80 323.05 T311.48 323.05 T313.15 323.05 T314.83 323.05 T316.50 323.05 T318.18 323.05 T319.85 323.05 T321.53 323.05 T323.20 323.05 T324.88 323.05 T326.55 323.05 T328.23 323.05 T329.90 323.05 T331.58 323.05 T333.25 323.05 M339.34 323.05 Q340.18 321.05 341.02 323.05 T342.69 323.05 T344.37 323.05 T346.04 323.05 T347.72 323.05 T349.39 323.05 T351.07 323.05 T352.74 323.05 T354.42 323.05 T356.09 323.05 T357.77 323.05 T359.44 323.05 T361.12 323.05 T362.79 323.05 T364.47 323.05 T366.14 323.05 T367.82 323.05 M378.56 323.05 Q379.40 321.05 380.24 323.05 T381.91 323.05 T383.59 323.05 T385.26 323.05 T386.94 323.05 T388.61 323.05 T390.29 323.05 T391.96 323.05 T393.64 323.05 T395.31 323.05 T396.99 323.05 T398.66 323.05 T400.34 323.05 T402.01 323.05 T403.69 323.05 T405.36 323.05 T407.04 323.05 T408.71 323.05 M415.00 323.05 Q415.84 321.05 416.68 323.05 T418.35 323.05 T420.03 323.05 T421.70 323.05 T423.38 323.05 T425.05 323.05 T426.73 323.05 T428.40 323.05 T430.08 323.05 T431.75 323.05 T433.43 323.05 T435.10 323.05 T436.78 323.05 T438.45 323.05 T440.13 323.05 T441.80 323.05 T443.48 323.05 T445.15 323.05 M451.44 323.05 Q452.27 321.05 453.11 323.05 T454.79 323.05 T456.46 323.05 T458.14 323.05 T459.81 323.05 T461.49 323.05 T463.16 323.05 T464.84 323.05 T466.51 323.05 T468.19 323.05 T469.86 323.05 T471.54 323.05 T473.21 323.05 T474.89 323.05 T476.56 323.05 T478.24 323.05 T479.91 323.05 T481.59 323.05 T483.26 323.05 T484.94 323.05 T486.61 323.05 T488.29 323.05 T489.96 323.05 T491.64 323.05 T493.31 323.05 T494.99 323.05 T496.66 323.05 T498.34 323.05 M503.45 323.05 Q504.29 321.05 505.13 323.05 T506.80 323.05 T508.48 323.05 T510.15 323.05 T511.83 323.05 T513.50 323.05 T515.18 323.05 T516.85 323.05 T518.53 323.05 T520.20 323.05 T521.88 323.05 T523.55 323.05 T525.23 323.05 T526.90 323.05 T528.58 323.05 T530.25 323.05 T531.93 323.05 T533.60 323.05 M538.84 323.05 Q539.68 321.05 540.52 323.05 T542.19 323.05 T543.87 323.05 T545.54 323.05 T547.22 323.05 T548.89 323.05 T550.57 323.05 T552.24 323.05 T553.92 323.05 T555.59 323.05 T557.27 323.05 T558.94 323.05 T560.62 323.05 T562.29 323.05 T563.97 323.05 T565.64 323.05 T567.32 323.05 T568.99 323.05 M575.25 323.05 Q576.09 321.05 576.92 323.05 T578.60 323.05 T580.27 323.05 T581.95 323.05 T583.62 323.05 T585.30 323.05 T586.97 323.05 T588.65 323.05 T590.32 323.05 T592.00 323.05 T593.67 323.05 T595.35 323.05 T597.02 323.05 T598.70 323.05 T600.37 323.05 T602.05 323.05 T603.72 323.05 T605.40 323.05 T607.07 323.05 T608.75 323.05 T610.42 323.05 T612.10 323.05 T613.77 323.05 T615.45 323.05 M621.05 323.05 Q621.88 321.05 622.72 323.05 T624.40 323.05 T626.07 323.05 T627.75 323.05 T629.42 323.05 T631.10 323.05 T632.77 323.05 T634.45 323.05 T636.12 323.05 T637.80 323.05 T639.47 323.05 T641.15 323.05 T642.82 323.05 T644.50 323.05 T646.17 323.05 T647.85 323.05 T649.52 323.05 T651.20 323.05 T652.87 323.05 T654.55 323.05 T656.22 323.05 T657.90 323.05 T659.57 323.05 T661.25 323.05 T662.92 323.05 T664.60 323.05 T666.27 323.05 M672.06 323.05 Q672.90 321.05 673.74 323.05 T675.41 323.05 T677.09 323.05 T678.76 323.05 T680.44 323.05 T682.11 323.05 T683.79 323.05 T685.46 323.05 T687.14 323.05 T688.81 323.05 T690.49 323.05 T692.16 323.05 T693.84 323.05 T695.51 323.05 T697.19 323.05 T698.86 323.05 T700.54 323.05 T702.21 323.05 T703.89 323.05 T705.56 323.05 T707.24 323.05 T708.91 323.05 T710.59 323.05 T712.26 323.05 T713.94 323.05 M718.91 323.05 Q719.74 321.05 720.58 323.05 T722.26 323.05 T723.93 323.05 T725.61 323.05 T727.28 323.05 T728.96 323.05 T730.63 323.05 T732.31 323.05 T733.98 323.05 T735.66 323.05 T737.33 323.05 T739.01 323.05 T740.68 323.05 T742.36 323.05 T744.03 323.05 T745.71 323.05 T747.38 323.05 T749.06 323.05 T750.73 323.05 T752.41 323.05 M757.45 323.05 Q758.29 321.05 759.13 323.05 T760.80 323.05 T762.48 323.05 T764.15 323.05 T765.83 323.05 T767.50 323.05 T769.18 323.05 T770.85 323.05 T772.53 323.05 T774.20 323.05 T775.88 323.05 T777.55 323.05 T779.23 323.05 T780.90 323.05 T782.58 323.05 T784.25 323.05 T785.93 323.05 T787.60 323.05 M792.84 323.05 Q793.68 321.05 794.52 323.05 T796.19 323.05 T797.87 323.05 T799.54 323.05 T801.22 323.05 T802.89 323.05 T804.57 323.05 T806.24 323.05 T807.92 323.05 T809.59 323.05 T811.27 323.05 T812.94 323.05 T814.62 323.05 T816.29 323.05 T817.97 323.05 M823.05 323.05 Q823.88 321.05 824.72 323.05 T826.40 323.05 T828.07 323.05 T829.75 323.05 T831.42 323.05 T833.10 323.05 T834.77 323.05 T836.45 323.05 T838.12 323.05 M859.52 323.05 Q860.35 321.05 861.19 323.05 T862.87 323.05 T864.54 323.05 T866.22 323.05 T867.89 323.05 T869.57 323.05 T871.24 323.05 T872.92 323.05 T874.59 323.05 T876.27 323.05 T877.94 323.05 T879.62 323.05 T881.29 323.05 T882.97 323.05 T884.64 323.05 T886.32 323.05 T887.99 323.05 T889.67 323.05 T891.34 323.05 T893.02 323.05 T894.69 323.05 T896.37 323.05 T898.04 323.05 T899.72 323.05 T901.39 323.05 M333.91 344.52 Q334.74 342.52 335.58 344.52 T337.26 344.52 T338.93 344.52 T340.61 344.52 T342.28 344.52 T343.96 344.52 T345.63 344.52 T347.31 344.52 T348.98 344.52 T350.66 344.52 T352.33 344.52 T354.01 344.52 M359.91 344.52 Q360.74 342.52 361.58 344.52 T363.26 344.52 T364.93 344.52 T366.61 344.52 T368.28 344.52 T369.96 344.52 T371.63 344.52 T373.31 344.52 T374.98 344.52 T376.66 344.52 T378.33 344.52 T380.01 344.52 T381.68 344.52 T383.36 344.52 T385.03 344.52 T386.71 344.52 T388.38 344.52 T390.06 344.52 M396.30 344.52 Q397.13 342.52 397.97 344.52 T399.65 344.52 T401.32 344.52 T403.00 344.52 T404.67 344.52 T406.35 344.52 T408.02 344.52 T409.70 344.52 T411.37 344.52 T413.05 344.52 T414.72 344.52 T416.40 344.52 M421.25 344.52 Q422.09 342.52 422.93 344.52 T424.60 344.52 T426.28 344.52 T427.95 344.52 T429.63 344.52 T431.30 344.52 T432.98 344.52 T434.65 344.52 T436.33 344.52 T438.00 344.52 T439.68 344.52 T441.35 344.52 T443.03 344.52 T444.70 344.52 T446.38 344.52 T448.05 344.52 T449.73 344.52 T451.40 344.52 T453.08 344.52 T454.75 344.52 T456.43 344.52 M461.80 344.52 Q462.63 342.52 463.47 344.52 T465.15 344.52 T466.82 344.52 T468.50 344.52 T470.17 344.52 T471.85 344.52 T473.52 344.52 T475.20 344.52 T476.87 344.52 T478.55 344.52 T480.22 344.52 T481.90 344.52 T483.57 344.52 T485.25 344.52 T486.92 344.52 T488.60 344.52 T490.27 344.52 T491.95 344.52 M498.16 344.52 Q498.99 342.52 499.83 344.52 T501.51 344.52 T503.18 344.52 T504.86 344.52 T506.53 344.52 T508.21 344.52 T509.88 344.52 T511.56 344.52 T513.23 344.52 T514.91 344.52 T516.58 344.52 T518.26 344.52 T519.93 344.52 M525.19 344.52 Q526.02 342.52 526.86 344.52 T528.54 344.52 T530.21 344.52 T531.89 344.52 T533.56 344.52 T535.24 344.52 T536.91 344.52 T538.59 344.52 T540.26 344.52 T541.94 344.52 T543.61 344.52 T545.29 344.52 T546.96 344.52 T548.64 344.52 T550.31 344.52 T551.99 344.52 T553.66 344.52 T555.34 344.52 T557.01 344.52 T558.69 344.52 T560.36 344.52 T562.04 344.52 T563.71 344.52 T565.39 344.52 T567.06 344.52 T568.74 344.52 T570.41 344.52 M576.12 344.52 Q576.96 342.52 577.80 344.52 T579.47 344.52 T581.15 344.52 T582.82 344.52 T584.50 344.52 T586.17 344.52 T587.85 344.52 T589.52 344.52 T591.20 344.52 T592.87 344.52 T594.55 344.52 T596.22 344.52 T597.90 344.52 T599.57 344.52 T601.25 344.52 T602.92 344.52 T604.60 344.52 T606.27 344.52 T607.95 344.52 M613.34 344.52 Q614.18 342.52 615.02 344.52 T616.69 344.52 T618.37 344.52 T620.04 344.52 T621.72 344.52 T623.39 344.52 T625.07 344.52 T626.74 344.52 T628.42 344.52 T630.09 344.52 T631.77 344.52 T633.44 344.52 T635.12 344.52 T636.79 344.52 T638.47 344.52 T640.14 344.52 T641.82 344.52 T643.49 344.52 T645.17 344.52 T646.84 344.52 T648.52 344.52 M653.89 344.52 Q654.73 342.52 655.57 344.52 T657.24 344.52 T658.92 344.52 T660.59 344.52 T662.27 344.52 T663.94 344.52 T665.62 344.52 T667.29 344.52 T668.97 344.52 T670.64 344.52 T672.32 344.52 T673.99 344.52 M679.89 344.52 Q680.73 342.52 681.57 344.52 T683.24 344.52 T684.92 344.52 T686.59 344.52 T688.27 344.52 T689.94 344.52 T691.62 344.52 T693.29 344.52 T694.97 344.52 T696.64 344.52 T698.32 344.52 T699.99 344.52 T701.67 344.52 T703.34 344.52 T705.02 344.52 T706.69 344.52 M712.16 344.52 Q712.99 342.52 713.83 344.52 T715.51 344.52 T717.18 344.52 T718.86 344.52 T720.53 344.52 T722.21 344.52 T723.88 344.52 T725.56 344.52 T727.23 344.52 T728.91 344.52 T730.58 344.52 T732.26 344.52 T733.93 344.52 T735.61 344.52 T737.28 344.52 T738.96 344.52 T740.63 344.52 T742.31 344.52 T743.98 344.52 T745.66 344.52 T747.33 344.52 T749.01 344.52 T750.68 344.52 T752.36 344.52 M757.89 344.52 Q758.73 342.52 759.57 344.52 T761.24 344.52 T762.92 344.52 T764.59 344.52 T766.27 344.52 T767.94 344.52 T769.62 344.52 T771.29 344.52 T772.97 344.52 T774.64 344.52 T776.32 344.52 T777.99 344.52 T779.67 344.52 T781.34 344.52 T783.02 344.52 T784.69 344.52 T786.37 344.52 T788.04 344.52 T789.72 344.52 T791.39 344.52 T793.07 344.52 T794.74 344.52 M799.48 344.52 Q800.32 342.52 801.16 344.52 T802.83 344.52 T804.51 344.52 T806.18 344.52 T807.86 344.52 T809.53 344.52 T811.21 344.52 T812.88 344.52 T814.56 344.52 T816.23 344.52 T817.91 344.52 T819.58 344.52 M825.48 344.52 Q826.32 342.52 827.16 344.52 T828.83 344.52 T830.51 344.52 T832.18 344.52 T833.86 344.52 T835.53 344.52 T837.21 344.52 T838.88 344.52 T840.56 344.52 T842.23 344.52 T843.91 344.52 T845.58 344.52 T847.26 344.52 T848.93 344.52 T850.61 344.52 T852.28 344.52 T853.96 344.52 T855.63 344.52 T857.31 344.52 T858.98 344.52 T860.66 344.52 T862.33 344.52 T864.01 344.52 T865.68 344.52 T867.36 344.52 T869.03 344.52 T870.71 344.52 T872.38 344.52 T874.06 344.52 T875.73 344.52 T877.41 344.52 T879.08 344.52 M283.00 365.99 Q283.84 363.99 284.68 365.99 T286.35 365.99 T288.03 365.99 T289.70 365.99 T291.38 365.99 T293.05 365.99 T294.73 365.99 T296.40 365.99 T298.08 365.99 T299.75 365.99 T301.43 365.99 T303.10 365.99 T304.78 365.99 T306.45 365.99 T308.13 365.99 T309.80 365.99 T311.48 365.99 T313.15 365.99 T314.83 365.99 T316.50 365.99 T318.18 365.99 T319.85 365.99 T321.53 365.99 T323.20 365.99 T324.88 365.99 M329.70 365.99 Q330.54 363.99 331.38 365.99 T333.05 365.99 T334.73 365.99 T336.40 365.99 T338.08 365.99 T339.75 365.99 T341.43 365.99 T343.10 365.99 T344.78 365.99 T346.45 365.99 T348.13 365.99 T349.80 365.99 T351.48 365.99 T353.15 365.99 T354.83 365.99 T356.50 365.99 T358.18 365.99 T359.85 365.99 T361.53 365.99 T363.20 365.99 T364.88 365.99 T366.55 365.99 T368.23 365.99 T369.90 365.99 T371.58 365.99 M377.47 365.99 Q378.31 363.99 379.14 365.99 T380.82 365.99 T382.49 365.99 T384.17 365.99 T385.84 365.99 T387.52 365.99 T389.19 365.99 T390.87 365.99 T392.54 365.99 T394.22 365.99 T395.89 365.99 T397.57 365.99 T399.24 365.99 T400.92 365.99 T402.59 365.99 M407.56 365.99 Q408.40 363.99 409.24 365.99 T410.91 365.99 T412.59 365.99 T414.26 365.99 T415.94 365.99 T417.61 365.99 T419.29 365.99 T420.96 365.99 T422.64 365.99 M443.86 365.99 Q444.70 363.99 445.53 365.99 T447.21 365.99 T448.88 365.99 T450.56 365.99 T452.23 365.99 T453.91 365.99 T455.58 365.99 T457.26 365.99 T458.93 365.99 T460.61 365.99 T462.28 365.99 T463.96 365.99 T465.63 365.99 T467.31 365.99 T468.98 365.99 T470.66 365.99 T472.33 365.99 T474.01 365.99 T475.68 365.99 T477.36 365.99 T479.03 365.99 T480.71 365.99 T482.38 365.99 T484.06 365.99 T485.73 365.99 T487.41 365.99 T489.08 365.99 T490.76 365.99 M495.72 365.99 Q496.56 363.99 497.39 365.99 T499.07 365.99 T500.74 365.99 T502.42 365.99 T504.09 365.99 T505.77 365.99 T507.44 365.99 T509.12 365.99 T510.79 365.99 T512.47 365.99 T514.14 365.99 T515.82 365.99 T517.49 365.99 T519.17 365.99 T520.84 365.99 T522.52 365.99 T524.19 365.99 T525.87 365.99 T527.54 365.99 T529.22 365.99 T530.89 365.99 T532.57 365.99 T534.24 365.99 T535.92 365.99 T537.59 365.99 T539.27 365.99 T540.94 365.99 T542.62 365.99 M547.58 365.99 Q548.42 363.99 549.25 365.99 T550.93 365.99 T552.60 365.99 T554.28 365.99 T555.95 365.99 T557.63 365.99 T559.30 365.99 T560.98 365.99 T562.65 365.99 T564.33 365.99 T566.00 365.99 T567.68 365.99 M573.50 365.99 Q574.34 363.99 575.17 365.99 T576.85 365.99 T578.52 365.99 T580.20 365.99 T581.87 365.99 T583.55 365.99 T585.22 365.99 T586.90 365.99 T588.57 365.99 T590.25 365.99 T591.92 365.99 T593.60 365.99 T595.27 365.99 T596.95 365.99 T598.62 365.99 T600.30 365.99 T601.97 365.99 T603.65 365.99 T605.32 365.99 M610.61 365.99 Q611.45 363.99 612.28 365.99 T613.96 365.99 T615.63 365.99 T617.31 365.99 T618.98 365.99 T620.66 365.99 T622.33 365.99 T624.01 365.99 T625.68 365.99 T627.36 365.99 T629.03 365.99 T630.71 365.99 M635.52 365.99 Q636.35 363.99 637.19 365.99 T638.87 365.99 T640.54 365.99 T642.22 365.99 T643.89 365.99 T645.57 365.99 T647.24 365.99 T648.92 365.99 T650.59 365.99 T652.27 365.99 T653.94 365.99 T655.62 365.99 T657.29 365.99 T658.97 365.99 T660.64 365.99 M666.64 365.99 Q667.48 363.99 668.32 365.99 T669.99 365.99 T671.67 365.99 T673.34 365.99 T675.02 365.99 T676.69 365.99 T678.37 365.99 T680.04 365.99 T681.72 365.99 T683.39 365.99 T685.07 365.99 T686.74 365.99 T688.42 365.99 T690.09 365.99 T691.77 365.99 T693.44 365.99 T695.12 365.99 T696.79 365.99 M701.92 365.99 Q702.76 363.99 703.60 365.99 T705.27 365.99 T706.95 365.99 T708.62 365.99 T710.30 365.99 T711.97 365.99 T713.65 365.99 T715.32 365.99 T717.00 365.99 T718.67 365.99 T720.35 365.99 T722.02 365.99 T723.70 365.99 T725.37 365.99 T727.05 365.99 T728.72 365.99 T730.40 365.99 T732.07 365.99 T733.75 365.99 T735.42 365.99 T737.10 365.99 T738.77 365.99 T740.45 365.99 T742.12 365.99 T743.80 365.99 T745.47 365.99 T747.15 365.99 T748.82 365.99 T750.50 365.99 T752.17 365.99 M757.95 365.99 Q758.79 363.99 759.63 365.99 T761.30 365.99 T762.98 365.99 T764.65 365.99 T766.33 365.99 T768.00 365.99 T769.68 365.99 T771.35 365.99 M777.67 365.99 Q778.51 363.99 779.35 365.99 T781.02 365.99 T782.70 365.99 T784.37 365.99 T786.05 365.99 T787.72 365.99 T789.40 365.99 T791.07 365.99 T792.75 365.99 T794.42 365.99 T796.10 365.99 T797.77 365.99 T799.45 365.99 T801.12 365.99 T802.80 365.99 T804.47 365.99 T806.15 365.99 T807.82 365.99 T809.50 365.99 T811.17 365.99 T812.85 365.99 T814.52 365.99 T816.20 365.99 T817.87 365.99 T819.55 365.99 T821.22 365.99 M832.48 365.99 Q833.32 363.99 834.16 365.99 T835.83 365.99 T837.51 365.99 T839.18 365.99 T840.86 365.99 T842.53 365.99 T844.21 365.99 T845.88 365.99 T847.56 365.99 T849.23 365.99 T850.91 365.99 T852.58 365.99 T854.26 365.99 T855.93 365.99 T857.61 365.99 T859.28 365.99 T860.96 365.99 T862.63 365.99 T864.31 365.99 T865.98 365.99 M870.86 365.99 Q871.70 363.99 872.53 365.99 T874.21 365.99 T875.88 365.99 T877.56 365.99 T879.23 365.99 T880.91 365.99 T882.58 365.99 T884.26 365.99 M283.00 387.46 Q283.84 385.46 284.68 387.46 T286.35 387.46 T288.03 387.46 T289.70 387.46 T291.38 387.46 T293.05 387.46 T294.73 387.46 T296.40 387.46 T298.08 387.46 T299.75 387.46 T301.43 387.46 T303.10 387.46 T304.78 387.46 T306.45 387.46 T308.13 387.46 T309.80 387.46 T311.48 387.46 T313.15 387.46 M319.36 387.46 Q320.20 385.46 321.03 387.46 T322.71 387.46 T324.38 387.46 T326.06 387.46 T327.73 387.46 T329.41 387.46 T331.08 387.46 T332.76 387.46 T334.43 387.46 T336.11 387.46 T337.78 387.46 T339.46 387.46 T341.13 387.46 T342.81 387.46 T344.48 387.46 T346.16 387.46 T347.83 387.46 T349.51 387.46 T351.18 387.46 T352.86 387.46 T354.53 387.46 T356.21 387.46 T357.88 387.46 M364.05 387.46 Q364.88 385.46 365.72 387.46 T367.40 387.46 T369.07 387.46 T370.75 387.46 T372.42 387.46 T374.10 387.46 T375.77 387.46 T377.45 387.46 T379.12 387.46 T380.80 387.46 T382.47 387.46 T384.15 387.46 T385.82 387.46 T387.50 387.46 T389.17 387.46 T390.85 387.46 T392.52 387.46 T394.20 387.46 M399.38 387.46 Q400.21 385.46 401.05 387.46 T402.73 387.46 T404.40 387.46 T406.08 387.46 T407.75 387.46 T409.43 387.46 T411.10 387.46 T412.78 387.46 T414.45 387.46 T416.13 387.46 T417.80 387.46 T419.48 387.46 T421.15 387.46 T422.83 387.46 T424.50 387.46 M430.58 387.46 Q431.42 385.46 432.25 387.46 T433.93 387.46 T435.60 387.46 T437.28 387.46 T438.95 387.46 T440.63 387.46 T442.30 387.46 T443.98 387.46 T445.65 387.46 T447.33 387.46 T449.00 387.46 T450.68 387.46 T452.35 387.46 T454.03 387.46 T455.70 387.46 T457.38 387.46 T459.05 387.46 T460.73 387.46 T462.40 387.46 M467.80 387.46 Q468.63 385.46 469.47 387.46 T471.15 387.46 T472.82 387.46 T474.50 387.46 T476.17 387.46 T477.85 387.46 T479.52 387.46 T481.20 387.46 T482.87 387.46 T484.55 387.46 T486.22 387.46 T487.90 387.46 T489.57 387.46 T491.25 387.46 T492.92 387.46 T494.60 387.46 T496.27 387.46 T497.95 387.46 T499.62 387.46 T501.30 387.46 T502.97 387.46 M508.36 387.46 Q509.20 385.46 510.03 387.46 T511.71 387.46 T513.38 387.46 T515.06 387.46 T516.73 387.46 T518.41 387.46 T520.08 387.46 T521.76 387.46 T523.43 387.46 T525.11 387.46 T526.78 387.46 T528.46 387.46 M533.31 387.46 Q534.15 385.46 534.99 387.46 T536.66 387.46 T538.34 387.46 T540.01 387.46 T541.69 387.46 T543.36 387.46 T545.04 387.46 T546.71 387.46 T548.39 387.46 T550.06 387.46 T551.74 387.46 T553.41 387.46 T555.09 387.46 M560.34 387.46 Q561.18 385.46 562.02 387.46 T563.69 387.46 T565.37 387.46 T567.04 387.46 T568.72 387.46 T570.39 387.46 T572.07 387.46 T573.74 387.46 T575.42 387.46 T577.09 387.46 T578.77 387.46 T580.44 387.46 M586.34 387.46 Q587.18 385.46 588.02 387.46 T589.69 387.46 T591.37 387.46 T593.04 387.46 T594.72 387.46 T596.39 387.46 T598.07 387.46 T599.74 387.46 T601.42 387.46 T603.09 387.46 T604.77 387.46 T606.44 387.46 T608.12 387.46 T609.79 387.46 T611.47 387.46 T613.14 387.46 T614.82 387.46 M620.64 387.46 Q621.48 385.46 622.32 387.46 T623.99 387.46 T625.67 387.46 T627.34 387.46 T629.02 387.46 T630.69 387.46 T632.37 387.46 T634.04 387.46 T635.72 387.46 T637.39 387.46 M642.48 387.46 Q643.32 385.46 644.16 387.46 T645.83 387.46 T647.51 387.46 T649.18 387.46 T650.86 387.46 T652.53 387.46 T654.21 387.46 T655.88 387.46 T657.56 387.46 T659.23 387.46 T660.91 387.46 T662.58 387.46 T664.26 387.46 T665.93 387.46 T667.61 387.46 T669.28 387.46 T670.96 387.46 T672.63 387.46 T674.31 387.46 T675.98 387.46 T677.66 387.46 T679.33 387.46 T681.01 387.46 T682.68 387.46 M688.25 387.46 Q689.09 385.46 689.92 387.46 T691.60 387.46 T693.27 387.46 T694.95 387.46 T696.62 387.46 T698.30 387.46 T699.97 387.46 T701.65 387.46 T703.32 387.46 T705.00 387.46 T706.67 387.46 T708.35 387.46 T710.02 387.46 T711.70 387.46 T713.37 387.46 M723.61 387.46 Q724.45 385.46 725.28 387.46 T726.96 387.46 T728.63 387.46 T730.31 387.46 T731.98 387.46 T733.66 387.46 T735.33 387.46 T737.01 387.46 T738.68 387.46 T740.36 387.46 T742.03 387.46 T743.71 387.46 T745.38 387.46 T747.06 387.46 T748.73 387.46 T750.41 387.46 T752.08 387.46 T753.76 387.46 M758.95 387.46 Q759.79 385.46 760.63 387.46 T762.30 387.46 T763.98 387.46 T765.65 387.46 T767.33 387.46 T769.00 387.46 T770.68 387.46 T772.35 387.46 T774.03 387.46 T775.70 387.46 T777.38 387.46 T779.05 387.46 T780.73 387.46 T782.40 387.46 T784.08 387.46 T785.75 387.46 T787.43 387.46 T789.10 387.46 M794.31 387.46 Q795.15 385.46 795.99 387.46 T797.66 387.46 T799.34 387.46 T801.01 387.46 T802.69 387.46 T804.36 387.46 T806.04 387.46 T807.71 387.46 T809.39 387.46 M814.08 387.46 Q814.92 385.46 815.75 387.46 T817.43 387.46 T819.10 387.46 T820.78 387.46 T822.45 387.46 T824.13 387.46 T825.80 387.46 T827.48 387.46 T829.15 387.46 T830.83 387.46 T832.50 387.46 T834.18 387.46 T835.85 387.46 T837.53 387.46 T839.20 387.46 M845.05 387.46 Q845.88 385.46 846.72 387.46 T848.40 387.46 T850.07 387.46 T851.75 387.46 T853.42 387.46 T855.10 387.46 T856.77 387.46 T858.45 387.46 T860.12 387.46 T861.80 387.46 T863.47 387.46 T865.15 387.46 T866.82 387.46 T868.50 387.46 T870.17 387.46 T871.85 387.46 T873.52 387.46 T875.20 387.46 T876.87 387.46 T878.55 387.46 T880.22 387.46 T881.90 387.46 T883.57 387.46 T885.25 387.46 T886.92 387.46 T888.60 387.46 T890.27 387.46 T891.95 387.46 T893.62 387.46 T895.30 387.46 T896.97 387.46 T898.65 387.46 M283.00 408.92 Q283.84 406.92 284.68 408.92 T286.35 408.92 T288.03 408.92 T289.70 408.92 T291.38 408.92 T293.05 408.92 T294.73 408.92 T296.40 408.92 T298.08 408.92 T299.75 408.92 T301.43 408.92 T303.10 408.92 T304.78 408.92 T306.45 408.92 T308.13 408.92 T309.80 408.92 T311.48 408.92 T313.15 408.92 T314.83 408.92 T316.50 408.92 T318.18 408.92 T319.85 408.92 T321.53 408.92 T323.20 408.92 T324.88 408.92 M329.80 408.92 Q330.63 406.92 331.47 408.92 T333.15 408.92 T334.82 408.92 T336.50 408.92 T338.17 408.92 T339.85 408.92 T341.52 408.92 T343.20 408.92 T344.87 408.92 T346.55 408.92 T348.22 408.92 T349.90 408.92 T351.57 408.92 T353.25 408.92 T354.92 408.92 T356.60 408.92 T358.27 408.92 T359.95 408.92 M366.20 408.92 Q367.04 406.92 367.88 408.92 T369.55 408.92 T371.23 408.92 T372.90 408.92 T374.58 408.92 T376.25 408.92 T377.93 408.92 T379.60 408.92 T381.28 408.92 T382.95 408.92 T384.63 408.92 T386.30 408.92 M391.16 408.92 Q391.99 406.92 392.83 408.92 T394.51 408.92 T396.18 408.92 T397.86 408.92 T399.53 408.92 T401.21 408.92 T402.88 408.92 T404.56 408.92 T406.23 408.92 T407.91 408.92 T409.58 408.92 T411.26 408.92 M416.11 408.92 Q416.95 406.92 417.78 408.92 T419.46 408.92 T421.13 408.92 T422.81 408.92 T424.48 408.92 T426.16 408.92 T427.83 408.92 T429.51 408.92 T431.18 408.92 T432.86 408.92 T434.53 408.92 T436.21 408.92 T437.88 408.92 T439.56 408.92 T441.23 408.92 T442.91 408.92 T444.58 408.92 T446.26 408.92 T447.93 408.92 T449.61 408.92 T451.28 408.92 T452.96 408.92 T454.63 408.92 T456.31 408.92 T457.98 408.92 T459.66 408.92 T461.33 408.92 T463.01 408.92 T464.68 408.92 T466.36 408.92 M471.03 408.92 Q471.87 406.92 472.71 408.92 T474.38 408.92 T476.06 408.92 T477.73 408.92 T479.41 408.92 T481.08 408.92 T482.76 408.92 T484.43 408.92 T486.11 408.92 T487.78 408.92 T489.46 408.92 T491.13 408.92 T492.81 408.92 M499.14 408.92 Q499.98 406.92 500.82 408.92 T502.49 408.92 T504.17 408.92 T505.84 408.92 T507.52 408.92 T509.19 408.92 T510.87 408.92 T512.54 408.92 T514.22 408.92 T515.89 408.92 T517.57 408.92 T519.24 408.92 T520.92 408.92 T522.59 408.92 T524.27 408.92 T525.94 408.92 T527.62 408.92 M533.47 408.92 Q534.31 406.92 535.14 408.92 T536.82 408.92 T538.49 408.92 T540.17 408.92 T541.84 408.92 T543.52 408.92 T545.19 408.92 T546.87 408.92 T548.54 408.92 T550.22 408.92 T551.89 408.92 T553.57 408.92 T555.24 408.92 T556.92 408.92 T558.59 408.92 T560.27 408.92 M570.70 408.92 Q571.54 406.92 572.38 408.92 T574.05 408.92 T575.73 408.92 T577.40 408.92 T579.08 408.92 T580.75 408.92 T582.43 408.92 T584.10 408.92 T585.78 408.92 T587.45 408.92 T589.13 408.92 T590.80 408.92 T592.48 408.92 T594.15 408.92 T595.83 408.92 T597.50 408.92 T599.18 408.92 T600.85 408.92 T602.53 408.92 T604.20 408.92 T605.88 408.92 T607.55 408.92 T609.23 408.92 T610.90 408.92 T612.58 408.92 T614.25 408.92 T615.93 408.92 T617.60 408.92 M642.47 408.92 Q643.31 406.92 644.14 408.92 T645.82 408.92 T647.49 408.92 T649.17 408.92 T650.84 408.92 T652.52 408.92 T654.19 408.92 T655.87 408.92 T657.54 408.92 T659.22 408.92 T660.89 408.92 T662.57 408.92 T664.24 408.92 T665.92 408.92 T667.59 408.92 T669.27 408.92 T670.94 408.92 T672.62 408.92 T674.29 408.92 T675.97 408.92 T677.64 408.92 M683.03 408.92 Q683.87 406.92 684.71 408.92 T686.38 408.92 T688.06 408.92 T689.73 408.92 T691.41 408.92 T693.08 408.92 T694.76 408.92 T696.43 408.92 T698.11 408.92 T699.78 408.92 T701.46 408.92 T703.13 408.92 T704.81 408.92 T706.48 408.92 T708.16 408.92 T709.83 408.92 T711.51 408.92 T713.18 408.92 M719.41 408.92 Q720.24 406.92 721.08 408.92 T722.76 408.92 T724.43 408.92 T726.11 408.92 T727.78 408.92 T729.46 408.92 T731.13 408.92 T732.81 408.92 T734.48 408.92 T736.16 408.92 T737.83 408.92 T739.51 408.92 T741.18 408.92 T742.86 408.92 T744.53 408.92 T746.21 408.92 T747.88 408.92 T749.56 408.92 T751.23 408.92 T752.91 408.92 T754.58 408.92 T756.26 408.92 T757.93 408.92 T759.61 408.92 M765.16 408.92 Q765.99 406.92 766.83 408.92 T768.51 408.92 T770.18 408.92 T771.86 408.92 T773.53 408.92 T775.21 408.92 T776.88 408.92 T778.56 408.92 T780.23 408.92 T781.91 408.92 T783.58 408.92 T785.26 408.92 T786.93 408.92 T788.61 408.92 T790.28 408.92 T791.96 408.92 T793.63 408.92 T795.31 408.92 T796.98 408.92 T798.66 408.92 M803.67 408.92 Q804.51 406.92 805.35 408.92 T807.02 408.92 T808.70 408.92 T810.37 408.92 T812.05 408.92 T813.72 408.92 T815.40 408.92 T817.07 408.92 T818.75 408.92 T820.42 408.92 T822.10 408.92 T823.77 408.92 T825.45 408.92 T827.12 408.92 T828.80 408.92 T830.47 408.92 T832.15 408.92 M837.97 408.92 Q838.81 406.92 839.64 408.92 T841.32 408.92 T842.99 408.92 T844.67 408.92 T846.34 408.92 T848.02 408.92 T849.69 408.92 T851.37 408.92 T853.04 408.92 T854.72 408.92 T856.39 408.92 T858.07 408.92 T859.74 408.92 T861.42 408.92 T863.09 408.92 T864.77 408.92 T866.44 408.92 T868.12 408.92 T869.79 408.92 T871.47 408.92 M881.69 408.92 Q882.52 406.92 883.36 408.92 T885.04 408.92 T886.71 408.92 T888.39 408.92 T890.06 408.92 T891.74 408.92 T893.41 408.92 T895.09 408.92 T896.76 408.92 M283.00 430.39 Q283.84 428.39 284.68 430.39 T286.35 430.39 T288.03 430.39 T289.70 430.39 T291.38 430.39 T293.05 430.39 T294.73 430.39 T296.40 430.39 T298.08 430.39 T299.75 430.39 T301.43 430.39 T303.10 430.39 T304.78 430.39 T306.45 430.39 T308.13 430.39 T309.80 430.39 T311.48 430.39 T313.15 430.39 T314.83 430.39 T316.50 430.39 T318.18 430.39 T319.85 430.39 T321.53 430.39 T323.20 430.39 T324.88 430.39 M330.80 430.39 Q331.63 428.39 332.47 430.39 T334.15 430.39 T335.82 430.39 T337.50 430.39 T339.17 430.39 T340.85 430.39 T342.52 430.39 T344.20 430.39 T345.87 430.39 T347.55 430.39 T349.22 430.39 T350.90 430.39 T352.57 430.39 T354.25 430.39 T355.92 430.39 M360.94 430.39 Q361.77 428.39 362.61 430.39 T364.29 430.39 T365.96 430.39 T367.64 430.39 T369.31 430.39 T370.99 430.39 T372.66 430.39 T374.34 430.39 T376.01 430.39 T377.69 430.39 T379.36 430.39 T381.04 430.39 T382.71 430.39 T384.39 430.39 T386.06 430.39 T387.74 430.39 T389.41 430.39 M395.23 430.39 Q396.07 428.39 396.91 430.39 T398.58 430.39 T400.26 430.39 T401.93 430.39 T403.61 430.39 T405.28 430.39 T406.96 430.39 T408.63 430.39 T410.31 430.39 T411.98 430.39 T413.66 430.39 T415.33 430.39 T417.01 430.39 T418.68 430.39 T420.36 430.39 T422.03 430.39 T423.71 430.39 M434.36 430.39 Q435.20 428.39 436.03 430.39 T437.71 430.39 T439.38 430.39 T441.06 430.39 T442.73 430.39 T444.41 430.39 T446.08 430.39 T447.76 430.39 T449.43 430.39 T451.11 430.39 T452.78 430.39 T454.46 430.39 T456.13 430.39 T457.81 430.39 T459.48 430.39 T461.16 430.39 T462.83 430.39 T464.51 430.39 T466.18 430.39 T467.86 430.39 T469.53 430.39 T471.21 430.39 T472.88 430.39 T474.56 430.39 T476.23 430.39 T477.91 430.39 T479.58 430.39 T481.26 430.39 T482.93 430.39 M488.38 430.39 Q489.21 428.39 490.05 430.39 T491.73 430.39 T493.40 430.39 T495.08 430.39 T496.75 430.39 T498.43 430.39 T500.10 430.39 T501.78 430.39 T503.45 430.39 T505.13 430.39 T506.80 430.39 T508.48 430.39 M513.31 430.39 Q514.15 428.39 514.99 430.39 T516.66 430.39 T518.34 430.39 T520.01 430.39 T521.69 430.39 T523.36 430.39 T525.04 430.39 T526.71 430.39 T528.39 430.39 T530.06 430.39 T531.74 430.39 T533.41 430.39 T535.09 430.39 T536.76 430.39 T538.44 430.39 T540.11 430.39 T541.79 430.39 T543.46 430.39 M549.47 430.39 Q550.31 428.39 551.14 430.39 T552.82 430.39 T554.49 430.39 T556.17 430.39 T557.84 430.39 T559.52 430.39 T561.19 430.39 T562.87 430.39 T564.54 430.39 T566.22 430.39 T567.89 430.39 T569.57 430.39 T571.24 430.39 T572.92 430.39 T574.59 430.39 T576.27 430.39 T577.94 430.39 T579.62 430.39 T581.29 430.39 T582.97 430.39 T584.64 430.39 T586.32 430.39 T587.99 430.39 T589.67 430.39 M595.19 430.39 Q596.02 428.39 596.86 430.39 T598.54 430.39 T600.21 430.39 T601.89 430.39 T603.56 430.39 T605.24 430.39 T606.91 430.39 T608.59 430.39 T610.26 430.39 T611.94 430.39 T613.61 430.39 T615.29 430.39 T616.96 430.39 T618.64 430.39 T620.31 430.39 T621.99 430.39 T623.66 430.39 T625.34 430.39 M631.56 430.39 Q632.40 428.39 633.24 430.39 T634.91 430.39 T636.59 430.39 T638.26 430.39 T639.94 430.39 T641.61 430.39 T643.29 430.39 T644.96 430.39 T646.64 430.39 T648.31 430.39 T649.99 430.39 T651.66 430.39 T653.34 430.39 T655.01 430.39 T656.69 430.39 T658.36 430.39 T660.04 430.39 M665.84 430.39 Q666.68 428.39 667.52 430.39 T669.19 430.39 T670.87 430.39 T672.54 430.39 T674.22 430.39 T675.89 430.39 T677.57 430.39 T679.24 430.39 T680.92 430.39 T682.59 430.39 T684.27 430.39 T685.94 430.39 T687.62 430.39 T689.29 430.39 T690.97 430.39 T692.64 430.39 T694.32 430.39 T695.99 430.39 M702.22 430.39 Q703.06 428.39 703.89 430.39 T705.57 430.39 T707.24 430.39 T708.92 430.39 T710.59 430.39 T712.27 430.39 T713.94 430.39 T715.62 430.39 T717.29 430.39 T718.97 430.39 T720.64 430.39 T722.32 430.39 T723.99 430.39 T725.67 430.39 T727.34 430.39 T729.02 430.39 T730.69 430.39 T732.37 430.39 T734.04 430.39 T735.72 430.39 T737.39 430.39 T739.07 430.39 T740.74 430.39 T742.42 430.39 T744.09 430.39 T745.77 430.39 T747.44 430.39 T749.12 430.39 T750.79 430.39 T752.47 430.39 T754.14 430.39 T755.82 430.39 M761.48 430.39 Q762.32 428.39 763.16 430.39 T764.83 430.39 T766.51 430.39 T768.18 430.39 T769.86 430.39 T771.53 430.39 T773.21 430.39 T774.88 430.39 T776.56 430.39 T778.23 430.39 T779.91 430.39 T781.58 430.39 T783.26 430.39 T784.93 430.39 T786.61 430.39 T788.28 430.39 T789.96 430.39 T791.63 430.39 T793.31 430.39 T794.98 430.39 T796.66 430.39 T798.33 430.39 T800.01 430.39 M806.16 430.39 Q806.99 428.39 807.83 430.39 T809.51 430.39 T811.18 430.39 T812.86 430.39 T814.53 430.39 T816.21 430.39 T817.88 430.39 T819.56 430.39 T821.23 430.39 T822.91 430.39 T824.58 430.39 T826.26 430.39 M832.14 430.39 Q832.98 428.39 833.82 430.39 T835.49 430.39 T837.17 430.39 T838.84 430.39 T840.52 430.39 T842.19 430.39 T843.87 430.39 T845.54 430.39 T847.22 430.39 T848.89 430.39 T850.57 430.39 T852.24 430.39 T853.92 430.39 T855.59 430.39 T857.27 430.39 T858.94 430.39 T860.62 430.39 T862.29 430.39 M283.00 451.86 Q283.84 449.86 284.68 451.86 T286.35 451.86 T288.03 451.86 T289.70 451.86 T291.38 451.86 T293.05 451.86 T294.73 451.86 T296.40 451.86 T298.08 451.86 T299.75 451.86 T301.43 451.86 T303.10 451.86 T304.78 451.86 T306.45 451.86 T308.13 451.86 T309.80 451.86 T311.48 451.86 T313.15 451.86 T314.83 451.86 T316.50 451.86 T318.18 451.86 T319.85 451.86 T321.53 451.86 T323.20 451.86 T324.88 451.86 M329.70 451.86 Q330.54 449.86 331.38 451.86 T333.05 451.86 T334.73 451.86 T336.40 451.86 T338.08 451.86 T339.75 451.86 T341.43 451.86 T343.10 451.86 T344.78 451.86 T346.45 451.86 T348.13 451.86 T349.80 451.86 M354.61 451.86 Q355.45 449.86 356.28 451.86 T357.96 451.86 T359.63 451.86 T361.31 451.86 T362.98 451.86 T364.66 451.86 T366.33 451.86 T368.01 451.86 T369.68 451.86 T371.36 451.86 T373.03 451.86 T374.71 451.86 T376.38 451.86 T378.06 451.86 T379.73 451.86 T381.41 451.86 T383.08 451.86 T384.76 451.86 T386.43 451.86 T388.11 451.86 T389.78 451.86 M395.09 451.86 Q395.93 449.86 396.77 451.86 T398.44 451.86 T400.12 451.86 T401.79 451.86 T403.47 451.86 T405.14 451.86 T406.82 451.86 T408.49 451.86 T410.17 451.86 T411.84 451.86 T413.52 451.86 T415.19 451.86 T416.87 451.86 T418.54 451.86 T420.22 451.86 T421.89 451.86 T423.57 451.86 T425.24 451.86 T426.92 451.86 T428.59 451.86 M434.53 451.86 Q435.37 449.86 436.21 451.86 T437.88 451.86 T439.56 451.86 T441.23 451.86 T442.91 451.86 T444.58 451.86 T446.26 451.86 T447.93 451.86 T449.61 451.86 T451.28 451.86 T452.96 451.86 T454.63 451.86 T456.31 451.86 T457.98 451.86 T459.66 451.86 T461.33 451.86 T463.01 451.86 T464.68 451.86 T466.36 451.86 T468.03 451.86 T469.71 451.86 T471.38 451.86 T473.06 451.86 T474.73 451.86 T476.41 451.86 M533.09 451.86 Q533.93 449.86 534.77 451.86 T536.44 451.86 T538.12 451.86 T539.79 451.86 T541.47 451.86 T543.14 451.86 T544.82 451.86 T546.49 451.86 T548.17 451.86 T549.84 451.86 T551.52 451.86 T553.19 451.86 M558.00 451.86 Q558.84 449.86 559.67 451.86 T561.35 451.86 T563.02 451.86 T564.70 451.86 T566.37 451.86 T568.05 451.86 T569.72 451.86 T571.40 451.86 T573.07 451.86 T574.75 451.86 T576.42 451.86 T578.10 451.86 T579.77 451.86 T581.45 451.86 T583.12 451.86 T584.80 451.86 T586.47 451.86 T588.15 451.86 T589.82 451.86 T591.50 451.86 T593.17 451.86 T594.85 451.86 T596.52 451.86 T598.20 451.86 M603.66 451.86 Q604.49 449.86 605.33 451.86 T607.01 451.86 T608.68 451.86 T610.36 451.86 T612.03 451.86 T613.71 451.86 T615.38 451.86 T617.06 451.86 T618.73 451.86 T620.41 451.86 T622.08 451.86 T623.76 451.86 T625.43 451.86 T627.11 451.86 T628.78 451.86 T630.46 451.86 T632.13 451.86 T633.81 451.86 T635.48 451.86 T637.16 451.86 M641.84 451.86 Q642.68 449.86 643.52 451.86 T645.19 451.86 T646.87 451.86 T648.54 451.86 T650.22 451.86 T651.89 451.86 T653.57 451.86 T655.24 451.86 T656.92 451.86 T658.59 451.86 T660.27 451.86 T661.94 451.86 T663.62 451.86 T665.29 451.86 T666.97 451.86 T668.64 451.86 T670.32 451.86 T671.99 451.86 T673.67 451.86 T675.34 451.86 T677.02 451.86 M682.33 451.86 Q683.17 449.86 684.00 451.86 T685.68 451.86 T687.35 451.86 T689.03 451.86 T690.70 451.86 T692.38 451.86 T694.05 451.86 T695.73 451.86 T697.40 451.86 T699.08 451.86 T700.75 451.86 T702.43 451.86 M707.23 451.86 Q708.07 449.86 708.91 451.86 T710.58 451.86 T712.26 451.86 T713.93 451.86 T715.61 451.86 T717.28 451.86 T718.96 451.86 T720.63 451.86 T722.31 451.86 T723.98 451.86 T725.66 451.86 T727.33 451.86 T729.01 451.86 T730.68 451.86 T732.36 451.86 T734.03 451.86 T735.71 451.86 T737.38 451.86 T739.06 451.86 T740.73 451.86 T742.41 451.86 T744.08 451.86 T745.76 451.86 T747.43 451.86 T749.11 451.86 T750.78 451.86 T752.46 451.86 T754.13 451.86 T755.81 451.86 T757.48 451.86 T759.16 451.86 M764.33 451.86 Q765.17 449.86 766.00 451.86 T767.68 451.86 T769.35 451.86 T771.03 451.86 T772.70 451.86 T774.38 451.86 T776.05 451.86 T777.73 451.86 T779.40 451.86 T781.08 451.86 T782.75 451.86 T784.43 451.86 T786.10 451.86 T787.78 451.86 T789.45 451.86 T791.13 451.86 T792.80 451.86 T794.48 451.86 T796.15 451.86 T797.83 451.86 T799.50 451.86 T801.18 451.86 T802.85 451.86 T804.53 451.86 T806.20 451.86 T807.88 451.86 T809.55 451.86 T811.23 451.86 T812.90 451.86 T814.58 451.86 M825.56 451.86 Q826.40 449.86 827.24 451.86 T828.91 451.86 T830.59 451.86 T832.26 451.86 T833.94 451.86 T835.61 451.86 T837.29 451.86 T838.96 451.86 T840.64 451.86 T842.31 451.86 T843.99 451.86 T845.66 451.86 T847.34 451.86 T849.01 451.86 T850.69 451.86 T852.36 451.86 T854.04 451.86 T855.71 451.86 T857.39 451.86 T859.06 451.86 T860.74 451.86 T862.41 451.86 T864.09 451.86 M283.00 473.33 Q283.84 471.33 284.68 473.33 T286.35 473.33 T288.03 473.33 T289.70 473.33 T291.38 473.33 T293.05 473.33 T294.73 473.33 T296.40 473.33 T298.08 473.33 T299.75 473.33 T301.43 473.33 T303.10 473.33 T304.78 473.33 T306.45 473.33 T308.13 473.33 T309.80 473.33 T311.48 473.33 T313.15 473.33 T314.83 473.33 T316.50 473.33 T318.18 473.33 T319.85 473.33 T321.53 473.33 T323.20 473.33 T324.88 473.33 M330.84 473.33 Q331.68 471.33 332.52 473.33 T334.19 473.33 T335.87 473.33 T337.54 473.33 T339.22 473.33 T340.89 473.33 T342.57 473.33 T344.24 473.33 T345.92 473.33 T347.59 473.33 T349.27 473.33 T350.94 473.33 T352.62 473.33 T354.29 473.33 T355.97 473.33 T357.64 473.33 T359.32 473.33 T360.99 473.33 T362.67 473.33 T364.34 473.33 T366.02 473.33 T367.69 473.33 T369.37 473.33 T371.04 473.33 T372.72 473.33 T374.39 473.33 M380.55 473.33 Q381.38 471.33 382.22 473.33 T383.90 473.33 T385.57 473.33 T387.25 473.33 T388.92 473.33 T390.60 473.33 T392.27 473.33 T393.95 473.33 T395.62 473.33 T397.30 473.33 T398.97 473.33 T400.65 473.33 T402.32 473.33 T404.00 473.33 T405.67 473.33 T407.35 473.33 T409.02 473.33 T410.70 473.33 T412.37 473.33 T414.05 473.33 T415.72 473.33 T417.40 473.33 T419.07 473.33 M425.22 473.33 Q426.06 471.33 426.89 473.33 T428.57 473.33 T430.24 473.33 T431.92 473.33 T433.59 473.33 T435.27 473.33 T436.94 473.33 T438.62 473.33 T440.29 473.33 T441.97 473.33 T443.64 473.33 T445.32 473.33 T446.99 473.33 T448.67 473.33 T450.34 473.33 T452.02 473.33 T453.69 473.33 T455.37 473.33 M460.53 473.33 Q461.37 471.33 462.21 473.33 T463.88 473.33 T465.56 473.33 T467.23 473.33 T468.91 473.33 T470.58 473.33 T472.26 473.33 T473.93 473.33 T475.61 473.33 T477.28 473.33 T478.96 473.33 T480.63 473.33 T482.31 473.33 T483.98 473.33 T485.66 473.33 T487.33 473.33 T489.01 473.33 M499.69 473.33 Q500.52 471.33 501.36 473.33 T503.04 473.33 T504.71 473.33 T506.39 473.33 T508.06 473.33 T509.74 473.33 T511.41 473.33 T513.09 473.33 T514.76 473.33 T516.44 473.33 T518.11 473.33 T519.79 473.33 T521.46 473.33 T523.14 473.33 T524.81 473.33 T526.49 473.33 T528.16 473.33 T529.84 473.33 M536.06 473.33 Q536.90 471.33 537.74 473.33 T539.41 473.33 T541.09 473.33 T542.76 473.33 T544.44 473.33 T546.11 473.33 T547.79 473.33 T549.46 473.33 T551.14 473.33 T552.81 473.33 T554.49 473.33 T556.16 473.33 M561.00 473.33 Q561.84 471.33 562.67 473.33 T564.35 473.33 T566.02 473.33 T567.70 473.33 T569.37 473.33 T571.05 473.33 T572.72 473.33 T574.40 473.33 T576.07 473.33 T577.75 473.33 T579.42 473.33 T581.10 473.33 T582.77 473.33 T584.45 473.33 T586.12 473.33 M592.19 473.33 Q593.02 471.33 593.86 473.33 T595.54 473.33 T597.21 473.33 T598.89 473.33 T600.56 473.33 T602.24 473.33 T603.91 473.33 T605.59 473.33 T607.26 473.33 T608.94 473.33 T610.61 473.33 T612.29 473.33 T613.96 473.33 T615.64 473.33 T617.31 473.33 T618.99 473.33 T620.66 473.33 T622.34 473.33 M627.52 473.33 Q628.35 471.33 629.19 473.33 T630.87 473.33 T632.54 473.33 T634.22 473.33 T635.89 473.33 T637.57 473.33 T639.24 473.33 T640.92 473.33 T642.59 473.33 T644.27 473.33 T645.94 473.33 T647.62 473.33 T649.29 473.33 T650.97 473.33 T652.64 473.33 T654.32 473.33 T655.99 473.33 T657.67 473.33 M663.88 473.33 Q664.71 471.33 665.55 473.33 T667.22 473.33 T668.90 473.33 T670.57 473.33 T672.25 473.33 T673.92 473.33 T675.60 473.33 T677.27 473.33 T678.95 473.33 T680.62 473.33 T682.30 473.33 T683.97 473.33 T685.65 473.33 T687.32 473.33 T689.00 473.33 T690.67 473.33 T692.35 473.33 T694.02 473.33 T695.70 473.33 T697.37 473.33 T699.05 473.33 T700.72 473.33 T702.40 473.33 T704.07 473.33 M709.59 473.33 Q710.43 471.33 711.27 473.33 T712.94 473.33 T714.62 473.33 T716.29 473.33 T717.97 473.33 T719.64 473.33 T721.32 473.33 T722.99 473.33 T724.67 473.33 T726.34 473.33 T728.02 473.33 T729.69 473.33 T731.37 473.33 T733.04 473.33 T734.72 473.33 T736.39 473.33 T738.07 473.33 T739.74 473.33 T741.42 473.33 T743.09 473.33 T744.77 473.33 T746.44 473.33 T748.12 473.33 T749.79 473.33 T751.47 473.33 T753.14 473.33 T754.82 473.33 M760.53 473.33 Q761.37 471.33 762.21 473.33 T763.88 473.33 T765.56 473.33 T767.23 473.33 T768.91 473.33 T770.58 473.33 T772.26 473.33 T773.93 473.33 T775.61 473.33 T777.28 473.33 T778.96 473.33 T780.63 473.33 T782.31 473.33 T783.98 473.33 T785.66 473.33 T787.33 473.33 T789.01 473.33 T790.68 473.33 T792.36 473.33 T794.03 473.33 T795.71 473.33 T797.38 473.33 T799.06 473.33 T800.73 473.33 T802.41 473.33 M807.30 473.33 Q808.13 471.33 808.97 473.33 T810.65 473.33 T812.32 473.33 T814.00 473.33 T815.67 473.33 T817.35 473.33 T819.02 473.33 T820.70 473.33 T822.37 473.33 T824.05 473.33 T825.72 473.33 T827.40 473.33 T829.07 473.33 T830.75 473.33 T832.42 473.33 T834.10 473.33 T835.77 473.33 T837.45 473.33 T839.12 473.33 T840.80 473.33 M845.80 473.33 Q846.63 471.33 847.47 473.33 T849.15 473.33 T850.82 473.33 T852.50 473.33 T854.17 473.33 T855.85 473.33 T857.52 473.33 T859.20 473.33 T860.87 473.33 T862.55 473.33 T864.22 473.33 T865.90 473.33 T867.57 473.33 T869.25 473.33 T870.92 473.33 T872.60 473.33 T874.27 473.33 T875.95 473.33 M881.12 473.33 Q881.96 471.33 882.80 473.33 T884.47 473.33 T886.15 473.33 T887.82 473.33 T889.50 473.33 T891.17 473.33 T892.85 473.33 T894.52 473.33 T896.20 473.33 T897.87 473.33 T899.55 473.33 T901.22 473.33 T902.90 473.33 T904.57 473.33 T906.25 473.33 M283.00 494.80 Q283.84 492.80 284.68 494.80 T286.35 494.80 T288.03 494.80 T289.70 494.80 T291.38 494.80 T293.05 494.80 T294.73 494.80 T296.40 494.80 T298.08 494.80 M319.38 494.80 Q320.21 492.80 321.05 494.80 T322.73 494.80 T324.40 494.80 T326.08 494.80 T327.75 494.80 T329.43 494.80 T331.10 494.80 T332.78 494.80 T334.45 494.80 T336.13 494.80 T337.80 494.80 T339.48 494.80 T341.15 494.80 T342.83 494.80 T344.50 494.80 T346.18 494.80 T347.85 494.80 T349.53 494.80 T351.20 494.80 T352.88 494.80 T354.55 494.80 T356.23 494.80 T357.90 494.80 T359.58 494.80 T361.25 494.80 M418.05 494.80 Q418.88 492.80 419.72 494.80 T421.40 494.80 T423.07 494.80 T424.75 494.80 T426.42 494.80 T428.10 494.80 T429.77 494.80 T431.45 494.80 T433.12 494.80 T434.80 494.80 T436.47 494.80 T438.15 494.80 M444.03 494.80 Q444.87 492.80 445.71 494.80 T447.38 494.80 T449.06 494.80 T450.73 494.80 T452.41 494.80 T454.08 494.80 T455.76 494.80 T457.43 494.80 T459.11 494.80 T460.78 494.80 T462.46 494.80 T464.13 494.80 T465.81 494.80 T467.48 494.80 T469.16 494.80 T470.83 494.80 T472.51 494.80 T474.18 494.80 T475.86 494.80 T477.53 494.80 T479.21 494.80 T480.88 494.80 T482.56 494.80 T484.23 494.80 T485.91 494.80 M490.80 494.80 Q491.63 492.80 492.47 494.80 T494.15 494.80 T495.82 494.80 T497.50 494.80 T499.17 494.80 T500.85 494.80 T502.52 494.80 T504.20 494.80 T505.87 494.80 T507.55 494.80 T509.22 494.80 T510.90 494.80 T512.57 494.80 T514.25 494.80 T515.92 494.80 T517.60 494.80 T519.27 494.80 T520.95 494.80 T522.62 494.80 T524.30 494.80 M529.03 494.80 Q529.87 492.80 530.71 494.80 T532.38 494.80 T534.06 494.80 T535.73 494.80 T537.41 494.80 T539.08 494.80 T540.76 494.80 T542.43 494.80 T544.11 494.80 T545.78 494.80 T547.46 494.80 T549.13 494.80' fill='none' stroke='#ff0000' stroke-width='1.2' stroke-linejoin='round'/></svg>
</body></html>
